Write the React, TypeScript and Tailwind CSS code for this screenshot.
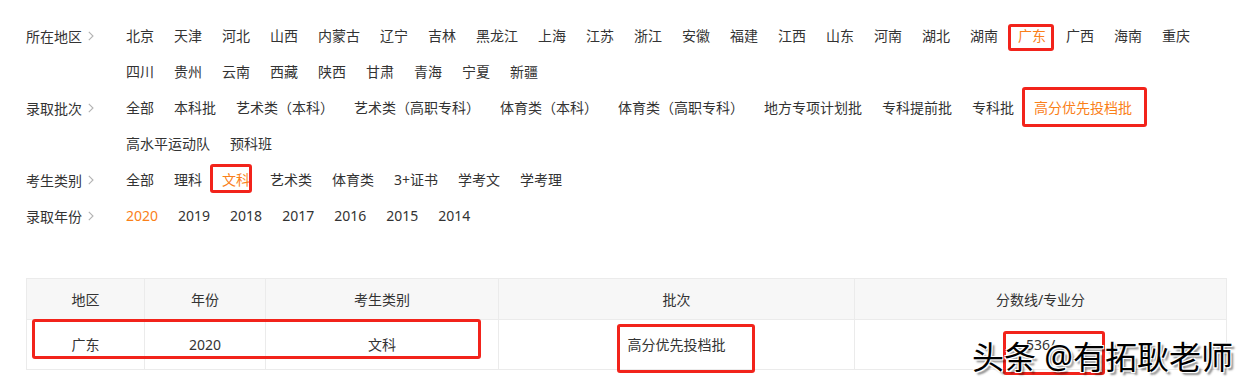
import React from 'react';

type Opt = { label: string; active?: boolean; box?: string };

const regions: Opt[] = [
  '北京', '天津', '河北', '山西', '内蒙古', '辽宁', '吉林', '黑龙江', '上海', '江苏', '浙江',
  '安徽', '福建', '江西', '山东', '河南', '湖北', '湖南',
].map(l => ({ label: l }) as Opt)
  .concat([{ label: '广东', active: true, box: 'left-0 right-[2px] top-[6px] bottom-[3px]' }])
  .concat(['广西', '海南', '重庆', '四川', '贵州', '云南', '西藏', '陕西', '甘肃', '青海', '宁夏', '新疆'].map(l => ({ label: l })));

const batches: Opt[] = [
  '全部', '本科批', '艺术类（本科）', '艺术类（高职专科）', '体育类（本科）', '体育类（高职专科）',
  '地方专项计划批', '专科提前批', '专科批',
].map(l => ({ label: l }) as Opt)
  .concat([{ label: '高分优先投档批', active: true, box: 'left-[-2px] right-[-5px] top-[-3px] bottom-[-1px]' }])
  .concat(['高水平运动队', '预科班'].map(l => ({ label: l })));

const types: Opt[] = [
  { label: '全部' },
  { label: '理科' },
  { label: '文科', active: true, box: 'left-[-2px] right-[8px] top-[2px] bottom-[5px]' },
  { label: '艺术类' },
  { label: '体育类' },
  { label: '3+证书' },
  { label: '学考文' },
  { label: '学考理' },
];

const years: Opt[] = ['2020', '2019', '2018', '2017', '2016', '2015', '2014'].map((l, i) => ({ label: l, active: i === 0 }));

function Chevron() {
  return (
    <svg width="6" height="10" viewBox="0 0 6 10" className="ml-[6px]" fill="none" stroke="#b3b3b3" strokeWidth={1.1}>
      <path d="M0.8 0.8 L5 5 L0.8 9.2" />
    </svg>
  );
}

function FilterRow({ label, options }: { label: string; options: Opt[] }) {
  return (
    <div className="flex">
      <div className="w-[90px] flex items-center h-[36px] shrink-0 text-[#333]">
        {label}
        <Chevron />
      </div>
      <div className="w-[1100px] flex flex-wrap">
        {options.map(o => (
          <span
            key={o.label}
            className={`relative px-[10px] h-[36px] leading-[35px] whitespace-nowrap ${o.active ? 'text-[#fa8019]' : 'text-[#333]'}`}
          >
            {o.label}
            {o.box && <span className={`absolute border-[3px] border-[#f2231b] rounded-[3px] ${o.box}`} />}
          </span>
        ))}
      </div>
    </div>
  );
}

export default function App() {
  const cols = ['w-[118px]', 'w-[121px]', 'w-[233px]', 'w-[356px]', 'w-[372px]'];
  const head = ['地区', '年份', '考生类别', '批次', '分数线/专业分'];
  const body = ['广东', '2020', '文科', '高分优先投档批', '536/'];

  return (
    <div
      className="w-[1245px] h-[388px] bg-white overflow-hidden pt-[18px] pl-[26px] text-[14px] text-[#333]"
      style={{ fontFamily: '"Noto Sans", "Noto Sans CJK SC", sans-serif' }}
    >
      <FilterRow label="所在地区" options={regions} />
      <FilterRow label="录取批次" options={batches} />
      <FilterRow label="考生类别" options={types} />
      <FilterRow label="录取年份" options={years} />

      {/* Result table */}
      <div className="relative mt-[44px] w-[1200px]">
        <table className="w-[1200px] border-collapse table-fixed">
          <colgroup>
            {cols.map(c => <col key={c} className={c} />)}
          </colgroup>
          <thead>
            <tr className="bg-[#f7f7f7] h-[41px]">
              {head.map(h => (
                <th key={h} className="border border-[#ebebeb] font-normal text-center text-[#333]">{h}</th>
              ))}
            </tr>
          </thead>
          <tbody>
            <tr className="h-[50px]">
              {body.map((b, i) => (
                <td key={i} className="border border-[#ebebeb] text-center text-[#333]">{b}</td>
              ))}
            </tr>
          </tbody>
        </table>

        {/* annotation boxes */}
        <span className="absolute left-[6px] top-[41px] w-[449px] h-[40px] border-[3px] border-[#f2231b] rounded-[3px]" />
        <span className="absolute left-[591px] top-[46px] w-[138px] h-[49px] border-[3px] border-[#f2231b] rounded-[3px]" />
        <span className="absolute left-[977px] top-[53px] w-[102px] h-[44px] border-[3px] border-[#f2231b] rounded-[3px]" />

        {/* watermark */}
        <span
          className="absolute left-[946px] top-[63px] text-[32px] leading-[32px] text-black whitespace-nowrap [text-shadow:-1px_-1px_0_#fff,1px_-1px_0_#fff,-1px_1px_0_#fff,1px_1px_0_#fff,3px_3px_2px_rgba(0,0,0,0.45)]"
        >
          头条 @有拓耿老师
        </span>
      </div>
    </div>
  );
}
